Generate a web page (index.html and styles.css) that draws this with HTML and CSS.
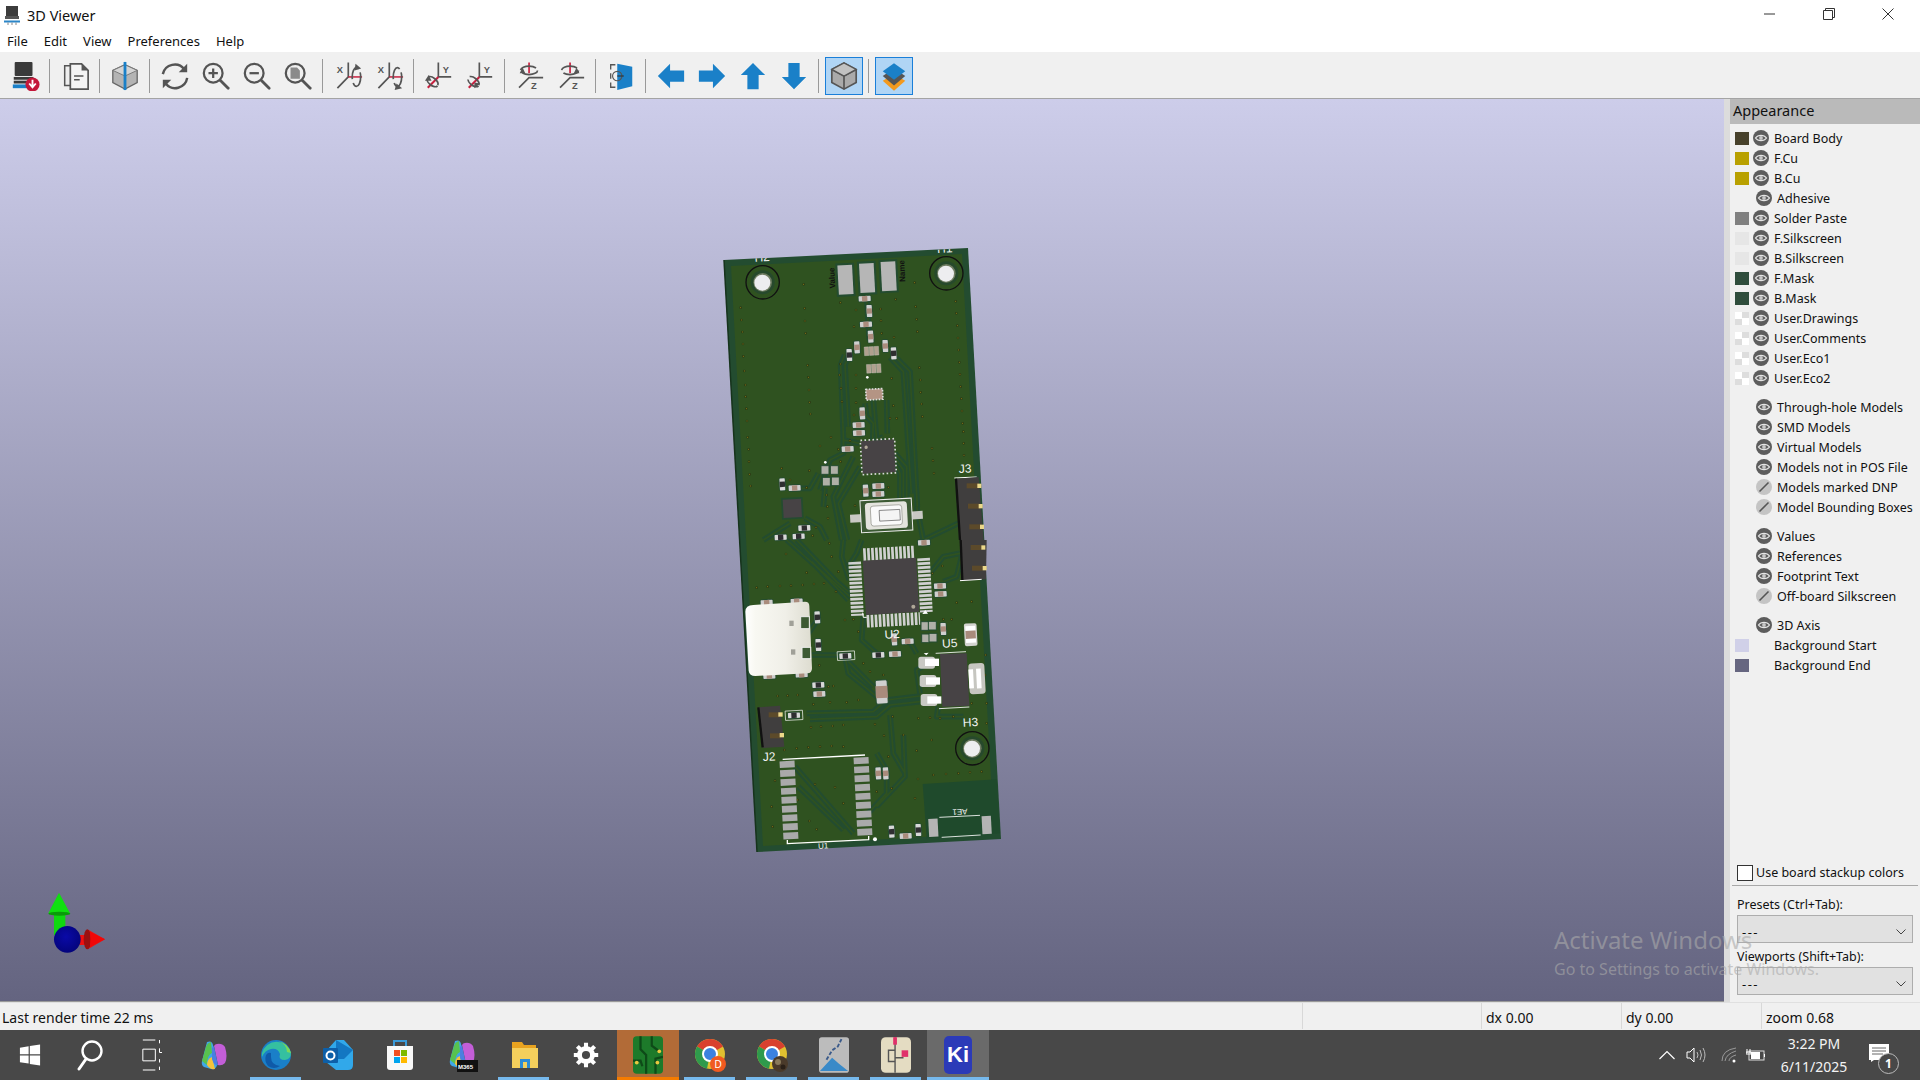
FILE: index.html
```html
<!DOCTYPE html>
<html lang="en">
<head>
  <meta charset="UTF-8">
  <title>3D Viewer</title>
  <link rel="stylesheet" href="styles.css">
</head>
<body>

<!-- shared icons -->
<svg class="defs" width="0" height="0">
  <defs>
    <symbol id="eye" viewBox="0 0 16 16">
      <circle cx="8" cy="8" r="8" fill="#5c5c5c"/>
      <path d="M2.5 8C5 4.4 11 4.4 13.5 8C11 11.6 5 11.6 2.5 8Z" fill="none" stroke="#e4e4e4" stroke-width="1.3"/>
      <circle cx="8" cy="8" r="1.9" fill="#c8c8c8"/>
    </symbol>
    <symbol id="eye-off" viewBox="0 0 16 16">
      <circle cx="8" cy="8" r="8" fill="#c4c4c4"/>
      <path d="M3.5 12.5L12.5 3.5" stroke="#555" stroke-width="1.6"/>
    </symbol>
    <symbol id="mag" viewBox="0 0 32 32">
      <circle cx="13" cy="13" r="10" fill="none" stroke="#545454" stroke-width="2.4"/>
      <path d="M20.5 20.5L29 29" stroke="#545454" stroke-width="3" stroke-linecap="round"/>
    </symbol>
    <symbol id="rot-x" viewBox="0 0 32 32">
      <text x="4" y="13" class="ax">X</text>
      <path d="M16.3 1.7V17L4.7 29" fill="none" stroke="#555" stroke-width="1.8"/>
      <path d="M16.3 17H31" stroke="#c8203f" stroke-width="1.6"/>
      <ellipse cx="25" cy="17" rx="4.5" ry="10" fill="none" stroke="#555" stroke-width="1.8" stroke-dasharray="17 4"/>
    </symbol>
    <symbol id="rot-y" viewBox="0 0 32 32">
      <text x="20" y="13" class="ax">Y</text>
      <path d="M15.3 1.7V17H29" fill="none" stroke="#555" stroke-width="1.8"/>
      <path d="M15.3 17L4 28.5" stroke="#c8203f" stroke-width="2.2"/>
      <ellipse cx="9" cy="22" rx="7" ry="4" transform="rotate(40 9 22)" fill="none" stroke="#555" stroke-width="1.8" stroke-dasharray="15 4"/>
    </symbol>
    <symbol id="rot-z" viewBox="0 0 32 32">
      <text x="17" y="30" class="ax">Z</text>
      <path d="M15 1.7V13" stroke="#c8203f" stroke-width="1.8"/>
      <path d="M30 17.7H15L4.3 28.3" fill="none" stroke="#555" stroke-width="1.8"/>
      <ellipse cx="15" cy="10" rx="9" ry="4.5" fill="none" stroke="#555" stroke-width="1.8" stroke-dasharray="18 4"/>
    </symbol>
    <symbol id="arrow" viewBox="0 0 32 32">
      <path d="M2 16L15 3V10H30V22H15V29Z" fill="#1a80c8"/>
    </symbol>
    <symbol id="chrome" viewBox="0 0 32 32">
      <circle cx="16" cy="16" r="15" fill="#e0c030"/>
      <path d="M16 16L3 8.5A15 15 0 0 1 29 8.5Z" fill="#d9402f"/>
      <path d="M16 16L3 8.5A15 15 0 0 0 13 30.7Z" fill="#2f9a4c"/>
      <circle cx="16" cy="16" r="7" fill="#3b82e0" stroke="#fff" stroke-width="2"/>
    </symbol>
    <symbol id="copilot" viewBox="0 0 32 32">
      <path d="M9 3Q14 1 15 6L19 26Q18 31 13 30L6 28Q3 26 4 22Z" fill="#3fa7e8"/>
      <path d="M4 22L8 8Q9 4 13 3L14 14Q9 16 9 26Z" fill="#58c24f"/>
      <path d="M9 26Q9 20 14 18L17 30Q12 31 9 26Z" fill="#f3c33a"/>
      <path d="M19 5Q24 4 27 8Q30 18 27 24Q24 27 20 26L16 7Q17 5 19 5Z" fill="#c35ed8"/>
      <path d="M16 7L20 26Q16 27 14 20L14 9Z" fill="#4a7fe0"/>
    </symbol>

    <!-- board parts, units are 1/3 px -->
    <g id="r" transform="rotate(-3)">
      <rect x="-21" y="-11" width="42" height="22" rx="8" fill="#244c30"/>
      <rect x="-18" y="-8" width="36" height="16" rx="2" fill="#cfcfcf"/>
      <rect x="-8" y="-8" width="16" height="16" fill="#a98b7c"/>
    </g>
    <g id="rv" transform="rotate(87)">
      <rect x="-21" y="-11" width="42" height="22" rx="8" fill="#244c30"/>
      <rect x="-18" y="-8" width="36" height="16" rx="2" fill="#cfcfcf"/>
      <rect x="-8" y="-8" width="16" height="16" fill="#a98b7c"/>
    </g>
    <g id="c" transform="rotate(-3)">
      <rect x="-21" y="-11" width="42" height="22" rx="8" fill="#244c30"/>
      <rect x="-18" y="-8" width="36" height="16" rx="2" fill="#d8d8d8"/>
      <rect x="-8" y="-8" width="16" height="16" fill="#2e2e30"/>
    </g>
    <g id="cv" transform="rotate(87)">
      <rect x="-21" y="-11" width="42" height="22" rx="8" fill="#244c30"/>
      <rect x="-18" y="-8" width="36" height="16" rx="2" fill="#d8d8d8"/>
      <rect x="-8" y="-8" width="16" height="16" fill="#2e2e30"/>
    </g>
    <g id="hole">
      <circle r="50" fill="none" stroke="#111" stroke-width="4"/>
      <circle r="36" fill="#27492c"/>
      <circle r="28" fill="#6f7c62"/>
      <circle cx="-1" cy="1" r="24" fill="#ededf0"/>
    </g>
    <g id="sq"><rect x="-12" y="-13" width="24" height="26" fill="#b0b0a8" stroke="#244c30" stroke-width="3"/></g>

    <clipPath id="top-edge"><polygon points="43,60 775,25 900,25 900,900 43,900"/></clipPath>

    <path id="via8" d="M92 203h0M94 240h0M97 276h0M99 312h0M100 349h0M103 393h0M106 435h0M107 470h0M109 506h0M111 543h0M113 592h0M116 628h0M117 665h0M119 703h0M122 738h0M281 133h0M284 205h0M285 243h0M287 280h0M293 376h0M295 412h0M297 450h0M299 487h0M301 522h0M614 128h0M617 200h0M620 238h0M622 275h0M628 383h0M631 420h0M632 457h0M635 492h0M637 530h0M737 184h0M739 220h0M742 257h0M744 294h0M746 330h0M748 367h0M750 403h0M752 440h0M754 476h0M756 513h0M758 550h0M760 575h0M761 610h0M762 646h0M666 625h0M669 662h0M672 700h0M391 188h0M438 210h0M432 260h0M512 207h0M513 242h0M515 280h0M557 178h0M552 292h0M391 372h0M389 405h0M438 405h0M393 445h0M438 445h0M396 485h0M438 488h0M432 525h0M545 415h0M550 497h0M540 535h0M560 535h0M363 592h0M385 628h0M330 618h0M298 692h0M290 743h0M350 765h0M352 800h0M354 835h0M240 720h0M215 685h0M318 862h0M308 887h0M420 602h0M392 665h0M535 742h0M435 797h0"/>
    <path id="via9" d="M80 143h0M113 140h0M150 138h0M183 137h0M218 135h0M252 132h0M282 130h0M143 468h0M173 467h0M203 465h0M243 562h0M273 560h0M308 558h0M340 555h0M163 630h0M200 625h0M235 622h0M270 620h0M305 618h0M340 620h0M168 42h0M230 98h0M298 10h0M305 50h0M325 95h0M318 155h0M345 240h0M370 238h0M385 275h0M268 376h0M295 440h0M310 438h0M300 487h0M250 493h0M350 487h0M385 480h0M400 370h0M420 395h0M460 405h0M488 530h0M520 585h0M475 650h0M485 745h0M440 755h0M555 775h0M564 717h0M610 705h0M648 702h0M685 700h0M720 697h0M755 695h0M565 535h0M600 533h0M670 530h0M770 550h0M630 535h0M435 553h0M462 587h0M560 632h0M605 600h0M125 800h0M128 860h0M135 722h0M165 750h0M203 780h0M238 843h0M260 868h0M340 790h0M315 742h0M255 733h0M607 100h0M637 78h0M680 188h0M640 238h0M665 238h0M725 185h0M695 490h0M765 405h0M767 345h0M725 490h0M770 490h0"/>
    <path id="tr8" d="M418 345L405 375L415 560M404 345L392 375L402 640M560 355L600 395L622 800M540 352L580 395L604 760M448 610L400 600V640L360 660L330 750M490 480L500 600L520 590M530 480L532 580M465 490L470 530L490 550L488 600M555 640L590 680V780M555 655L580 690V780M555 670L570 700V780M430 650L370 770L395 900M450 680L385 790L412 900M250 745L300 745L325 700M240 850L160 900M285 835L330 860L350 900M640 900L745 850M470 170L478 300M620 800L640 900M345 745L340 800"/>
    <path id="tr9" d="M360 170L170 0M355 180L245 65M355 155L320 125L200 0M245 345H330M355 365L430 440M400 230L395 300L440 340M230 520L430 515L470 480L570 468M240 538L440 530L480 495L570 485M480 525L490 640L525 700M520 585L525 710L440 800M195 680L370 880M205 740L340 870M440 640L470 690L470 760L405 830M540 305L560 340M235 280L262 240M345 350L355 400L440 470M595 370L560 390L570 460M700 30L680 110L640 125M395 0L380 40L355 80M340 0L335 50L358 120M600 100L640 50L690 40M625 500L620 530L700 530"/>
  </defs>
</svg>

<div class="title-bar">
  <svg class="app-icon" viewBox="0 0 16 20" width="16" height="20">
    <rect x="2" y="1" width="12" height="10" fill="#3c3c3c"/>
    <rect x="1" y="11" width="14" height="3" fill="#555"/>
    <rect x="0" y="15.5" width="16" height="2" fill="#2b86c8"/>
    <path d="M4 17.5v2.5M8 17.5v2.5M12 17.5v2.5" stroke="#888"/>
  </svg>
  <span class="title-text">3D Viewer</span>
  <div class="win-buttons">
    <svg viewBox="0 0 12 12" width="12" height="12"><path d="M0 6H11" stroke="#333"/></svg>
    <svg viewBox="0 0 12 12" width="12" height="12"><path d="M.5 2.5H9.5V11.5H.5ZM2.5 2.5V.5H11.5V9.5H9.5" fill="none" stroke="#333"/></svg>
    <svg viewBox="0 0 12 12" width="12" height="12"><path d="M.5 .5L11.5 11.5M11.5 .5L.5 11.5" stroke="#333"/></svg>
  </div>
</div>

<div class="menu-bar">
  <span>File</span><span>Edit</span><span>View</span><span>Preferences</span><span>Help</span>
</div>

<div class="toolbar">
  <button class="tool"><svg viewBox="0 0 32 32">
    <rect x="5" y="1" width="19" height="15" rx="1" fill="#3a3a3a"/>
    <rect x="4" y="17" width="21" height="3" fill="#3a3a3a"/>
    <rect x="4" y="21" width="21" height="3" fill="#3a3a3a"/>
    <rect x="3" y="25" width="20" height="4" fill="#1a80c8"/>
    <circle cx="24" cy="25" r="7.5" fill="#c4173a"/>
    <path d="M24 20v7M20.500 24l3.500 4 3.500-4" fill="none" stroke="#fff" stroke-width="2"/>
  </svg></button>
  <i class="sep"></i>
  <button class="tool"><svg viewBox="0 0 32 32">
    <path d="M11 5H5V26H11" fill="#eee" stroke="#555" stroke-width="1.6"/>
    <path d="M11 3H23L30 10V30H11Z" fill="#f4f4f4" stroke="#555" stroke-width="1.8"/>
    <path d="M23 3V10H30Z" fill="#555"/>
    <path d="M15 16H25M15 20H21" stroke="#555" stroke-width="1.6"/>
  </svg></button>
  <i class="sep"></i>
  <button class="tool"><svg viewBox="0 0 32 32">
    <path d="M16 4L29 10V23L16 30L3 23V10Z" fill="#b4b4b4" stroke="#666" stroke-width="1.4"/>
    <path d="M3 10L16 16L29 10L16 4Z" fill="#d4d4d4" stroke="#777"/>
    <path d="M16 1V31" stroke="#1a80c8" stroke-width="3"/>
  </svg></button>
  <i class="sep"></i>
  <button class="tool"><svg viewBox="0 0 32 32">
    <path d="M3 14A13 13 0 0 1 26 9" fill="none" stroke="#545454" stroke-width="2.6"/>
    <path d="M29 18A13 13 0 0 1 6 24" fill="none" stroke="#545454" stroke-width="2.6"/>
    <path d="M29 3V12H20Z M3 29V20H12Z" fill="#545454"/>
  </svg></button>
  <button class="tool"><svg viewBox="0 0 32 32"><use href="#mag"/><path d="M8 13H18M13 8V18" stroke="#545454" stroke-width="2.4"/></svg></button>
  <button class="tool"><svg viewBox="0 0 32 32"><use href="#mag"/><path d="M8 13H18" stroke="#545454" stroke-width="2.4"/></svg></button>
  <button class="tool"><svg viewBox="0 0 32 32"><use href="#mag"/><path d="M8 7H15L18 10V19H8Z" fill="#8a8a8a"/></svg></button>
  <i class="sep"></i>
  <button class="tool"><svg viewBox="0 0 32 32"><use href="#rot-x"/><path d="M24 3L30 8L23 10Z" fill="#555"/></svg></button>
  <button class="tool"><svg viewBox="0 0 32 32"><use href="#rot-x"/><path d="M30 29L24 24L22 31Z" fill="#555"/></svg></button>
  <i class="sep"></i>
  <button class="tool"><svg viewBox="0 0 32 32"><use href="#rot-y"/><path d="M1 21L5 15L8 21Z" fill="#555"/></svg></button>
  <button class="tool"><svg viewBox="0 0 32 32"><use href="#rot-y"/><path d="M16 24L10 29L10 23Z" fill="#555"/></svg></button>
  <i class="sep"></i>
  <button class="tool"><svg viewBox="0 0 32 32"><use href="#rot-z"/><path d="M5 13L8 7L11 13Z" fill="#555"/></svg></button>
  <button class="tool"><svg viewBox="0 0 32 32"><use href="#rot-z"/><path d="M25 13L22 7L19 13Z" fill="#555"/></svg></button>
  <i class="sep"></i>
  <button class="tool"><svg viewBox="0 0 32 32">
    <path d="M10 4H5V9M5 13V19M5 23V28H10" fill="none" stroke="#555" stroke-width="1.4"/>
    <path d="M12 3L28 6V27L12 31Z" fill="#1a80c8"/>
    <circle cx="12" cy="16" r="5" fill="none" stroke="#555" stroke-width="1.2"/>
    <path d="M12 16H19" stroke="#333" stroke-width="1.2"/>
  </svg></button>
  <i class="sep"></i>
  <button class="tool"><svg viewBox="0 0 32 32"><use href="#arrow"/></svg></button>
  <button class="tool"><svg viewBox="0 0 32 32"><use href="#arrow" transform="rotate(180 16 16)"/></svg></button>
  <button class="tool"><svg viewBox="0 0 32 32"><use href="#arrow" transform="rotate(90 16 16)"/></svg></button>
  <button class="tool"><svg viewBox="0 0 32 32"><use href="#arrow" transform="rotate(-90 16 16)"/></svg></button>
  <i class="sep"></i>
  <button class="tool on"><svg viewBox="0 0 32 32">
    <path d="M16 2L29 9V23L16 30L3 23V9Z" fill="#aaa" stroke="#555" stroke-width="1.8"/>
    <path d="M3 9L16 16L29 9M16 16V30" fill="none" stroke="#555" stroke-width="1.8"/>
    <path d="M3 9L16 2L29 9L16 16Z" fill="#c2c2c2" stroke="#555" stroke-width="1.4"/>
  </svg></button>
  <i class="sep"></i>
  <button class="tool on"><svg viewBox="0 0 32 32">
    <path d="M4 21L16 14L28 21L16 31.7Z" fill="#f39a1e"/>
    <path d="M4 16L16 8L28 16L16 26Z" fill="#555"/>
    <path d="M16 2.500L28 11L16 20L4 11Z" fill="#1a80c8"/>
  </svg></button>
</div>

<div class="main">
  <div class="canvas">
    <svg class="scene" viewBox="0 99 1724 902">
      <polygon points="724,260 968,248 1001,839 757,852" fill="#234c30"/>
      <path d="M724 260L757 852" stroke="#16331c" stroke-width="1.500"/>
      <polygon points="731,266 962,254 994,833 763,846" fill="#2f5220"/>

      <!-- top half of the board -->
      <g transform="translate(710 240) scale(.33333)">
        <g fill="none" stroke-linejoin="round">
          <use href="#tr8" stroke="#234c30" stroke-width="17"/>
          <use href="#tr8" stroke="#2f5220" stroke-width="5"/>
        </g>
        <g fill="none" stroke-linecap="round">
          <use href="#via8" stroke="#2b3a16" stroke-width="8"/>
          <use href="#via8" stroke="#a08a18" stroke-width="3"/>
        </g>

        <use href="#hole" x="158" y="127"/>
        <use href="#hole" x="709" y="100"/>
        <g clip-path="url(#top-edge)">
          <text class="silk" x="157" y="64" text-anchor="middle" transform="rotate(-3 157 64)">H2</text>
          <text class="silk" x="705" y="38" text-anchor="middle" transform="rotate(-3 705 38)">H1</text>
        </g>

        <g transform="rotate(-3 470 110)" fill="#b6b6b6" stroke="#244c30" stroke-width="12">
          <rect x="384" y="72" width="44" height="88" paint-order="stroke"/>
          <rect x="449" y="70" width="44" height="88" paint-order="stroke"/>
          <rect x="514" y="68" width="44" height="88" paint-order="stroke"/>
        </g>
        <text class="ref" transform="translate(376 145) rotate(-93)">Value</text>
        <text class="ref" transform="translate(586 125) rotate(-93)">Name</text>

        <use href="#r" x="464" y="176"/><use href="#rv" x="478" y="213"/>
        <use href="#r" x="468" y="253"/><use href="#rv" x="482" y="290"/>
        <use href="#rv" x="441" y="322"/><use href="#rv" x="526" y="318"/>
        <use href="#cv" x="418" y="345"/><use href="#cv" x="551" y="340"/>
        <g transform="rotate(-3 484 332)" fill="#b0a08e" stroke="#cfcfcf" stroke-width="1">
          <rect x="463" y="320" width="13" height="26"/><rect x="478" y="320" width="13" height="26"/><rect x="493" y="320" width="13" height="26"/>
          <rect x="467" y="373" width="13" height="26"/><rect x="482" y="373" width="13" height="26"/><rect x="497" y="373" width="13" height="26"/>
        </g>
        <circle cx="472" cy="412" r="4" fill="#fff"/>
        <rect x="468" y="447" width="50" height="32" fill="#b49484" stroke="#ddd" stroke-width="5" stroke-dasharray="5 4" transform="rotate(-3 492 462)"/>
        <use href="#rv" x="457" y="520"/>
        <use href="#r" x="446" y="555"/><use href="#r" x="447" y="579"/><use href="#r" x="413" y="627"/>

        <g transform="rotate(-3 505 650)">
          <rect x="454" y="599" width="102" height="102" fill="none" stroke="#d8d8d8" stroke-width="6" stroke-dasharray="5 7"/>
          <rect x="456" y="601" width="98" height="98" fill="#474345"/>
          <circle cx="470" cy="620" r="5" fill="#b0a898"/>
        </g>
        <use href="#sq" x="345" y="690"/><use href="#sq" x="373" y="690"/>
        <use href="#sq" x="349" y="725"/><use href="#sq" x="376" y="724"/>
        <circle cx="346" cy="667" r="4" fill="#fff"/>

        <use href="#rv" x="467" y="752"/><use href="#r" x="505" y="738"/><use href="#r" x="505" y="762"/>
        <use href="#cv" x="217" y="733"/><use href="#r" x="254" y="744"/>
        <rect x="217" y="775" width="60" height="60" fill="#474345" stroke="#244c30" stroke-width="5" transform="rotate(-3 247 805)"/>
        <use href="#c" x="283" y="864"/><use href="#c" x="266" y="889"/><use href="#c" x="212" y="892"/>

        <g transform="rotate(-3 535 823)">
          <rect x="420" y="818" width="40" height="24" fill="#c9c9c4"/>
          <rect x="606" y="818" width="32" height="24" fill="#c9c9c4"/>
          <rect x="452" y="778" width="154" height="96" fill="#3c5a34" stroke="#ececec" stroke-width="3"/>
          <rect x="466" y="786" width="126" height="80" rx="10" fill="#e4e4de"/>
          <rect x="482" y="796" width="94" height="60" rx="8" fill="#fafafa" stroke="#8c8c84" stroke-width="2"/>
          <rect x="508" y="810" width="62" height="32" fill="#f4f4f4" stroke="#555" stroke-width="2"/>
        </g>

        <text class="silk" x="766" y="698" text-anchor="middle" transform="rotate(-3 766 698)">J3</text>
        <path d="M733 714L800 711" stroke="#fff" stroke-width="3"/>
        <polygon points="738,716 806,711 821,900 750,900" fill="#403e3e"/>
        <path d="M738 716L750 900" stroke="#111" stroke-width="7"/>
        <g fill="#5c4a2a">
          <rect x="770" y="730" width="36" height="15"/><rect x="774" y="791" width="36" height="15"/><rect x="778" y="853" width="36" height="15"/>
        </g>
        <g fill="#ecd88a">
          <rect x="802" y="731" width="12" height="13"/><rect x="806" y="792" width="12" height="13"/><rect x="810" y="854" width="12" height="13"/>
        </g>
      </g>

      <!-- bottom half of the board -->
      <g transform="translate(730 540) scale(.33333)">
        <polygon points="578,732 800,718 810,880 590,895" fill="#1f4a2c"/>
        <g fill="none" stroke-linejoin="round">
          <use href="#tr9" stroke="#234c30" stroke-width="17"/>
          <use href="#tr9" stroke="#2f5220" stroke-width="5"/>
        </g>
        <g fill="none" stroke-linecap="round">
          <use href="#via9" stroke="#2b3a16" stroke-width="8"/>
          <use href="#via9" stroke="#a08a18" stroke-width="3"/>
        </g>

        <polygon points="690,0 770,0 768,118 695,122" fill="#403e3e"/>
        <path d="M690 122L755 118" stroke="#fff" stroke-width="3"/>
        <path d="M692 0L697 120" stroke="#111" stroke-width="7"/>
        <rect x="722" y="15" width="32" height="15" fill="#5c4a2a"/><rect x="754" y="16" width="12" height="13" fill="#ecd88a"/>
        <rect x="726" y="77" width="32" height="15" fill="#5c4a2a"/><rect x="758" y="78" width="12" height="13" fill="#ecd88a"/>

        <g transform="rotate(-3 480 140)" fill="none" stroke="#d0d0d0" stroke-dasharray="8 4">
          <path d="M405 40H560" stroke-width="38" />
          <path d="M405 240H565" stroke-width="38" />
          <path d="M378 60V222" stroke-width="38" />
          <path d="M585 60V222" stroke-width="38" />
        </g>
        <polygon points="398,62 558,53 568,215 408,225" fill="#474345"/>
        <circle cx="550" cy="200" r="6" fill="#b0a898"/>
        <path d="M398 218L400 232H410" fill="none" stroke="#fff" stroke-width="3"/>
        <path d="M577 222L586 210L594 221Z" fill="#fff"/>
        <use href="#r" x="582" y="8"/><use href="#r" x="630" y="138"/><use href="#r" x="632" y="162"/>

        <!-- usb connector -->
        <use href="#r" x="110" y="188"/><use href="#r" x="200" y="184"/>
        <use href="#r" x="118" y="408"/><use href="#r" x="215" y="404"/>
        <defs>
          <linearGradient id="usb" x1="0" y1="0" x2="1" y2="0">
            <stop offset="0" stop-color="#ffffff"/><stop offset=".15" stop-color="#f8f8f2"/>
            <stop offset=".6" stop-color="#f0efe8"/><stop offset="1" stop-color="#dddcd0"/>
          </linearGradient>
        </defs>
        <path d="M70 195L225 185Q238 185 238 198L246 385Q246 400 232 400L76 408Q58 408 56 392L46 215Q46 196 70 195Z" fill="url(#usb)"/>
        <rect x="178" y="242" width="13" height="16" fill="#a0a098"/>
        <rect x="183" y="328" width="13" height="16" fill="#a0a098"/>
        <rect x="212" y="230" width="26" height="36" fill="#3c5a34" stroke="#eee" stroke-width="3"/>
        <rect x="216" y="322" width="26" height="34" fill="#3c5a34" stroke="#eee" stroke-width="3"/>

        <use href="#cv" x="262" y="232"/><use href="#cv" x="265" y="315"/>
        <use href="#c" x="265" y="435"/><use href="#r" x="268" y="462"/>
        <rect x="322" y="334" width="52" height="26" fill="none" stroke="#fff" stroke-width="2" transform="rotate(-3 348 347)"/>
        <use href="#c" x="346" y="348"/>
        <use href="#c" x="445" y="345"/><use href="#r" x="495" y="342"/>
        <use href="#rv" x="493" y="298"/><use href="#r" x="533" y="304"/>
        <g transform="rotate(-3 455 455)">
          <rect x="437" y="420" width="36" height="72" rx="5" fill="#cfcfcf" stroke="#244c30" stroke-width="3"/>
          <rect x="437" y="438" width="36" height="36" fill="#a98b7c"/>
        </g>
        <g transform="rotate(-3 723 282)">
          <rect x="703" y="250" width="38" height="68" rx="6" fill="#d4d4d0"/>
          <rect x="707" y="258" width="30" height="14" fill="#fff"/>
          <rect x="707" y="272" width="30" height="24" fill="#a98b7c"/>
          <rect x="707" y="296" width="30" height="12" fill="#fff"/>
        </g>
        <use href="#sq" x="585" y="258"/><use href="#sq" x="607" y="257"/>
        <use href="#sq" x="587" y="295"/><use href="#sq" x="609" y="293"/>
        <use href="#rv" x="640" y="267"/>

        <text class="silk" x="487" y="295" text-anchor="middle" transform="rotate(-3 487 295)">U2</text>
        <text class="silk" x="660" y="322" text-anchor="middle" transform="rotate(-3 660 322)">U5</text>
        <text class="silk" x="722" y="559" text-anchor="middle" transform="rotate(-3 722 559)">H3</text>
        <text class="silk" x="118" y="662" text-anchor="middle" transform="rotate(-3 118 662)">J2</text>

        <g fill="#c9c9c4">
          <rect x="565" y="350" width="50" height="36" rx="8"/>
          <rect x="569" y="405" width="50" height="36" rx="8"/>
          <rect x="572" y="462" width="50" height="36" rx="8"/>
        </g>
        <g fill="#fff">
          <rect x="585" y="356" width="42" height="22"/>
          <rect x="588" y="412" width="42" height="22"/>
          <rect x="592" y="469" width="42" height="22"/>
        </g>
        <polygon points="630,342 710,340 718,497 637,500" fill="#474345"/>
        <path d="M617 340L708 335M627 506L718 501" stroke="#fff" stroke-width="2.500"/>
        <path d="M581 340L596 338L589 346Z" fill="#fff"/>
        <rect x="717" y="370" width="48" height="92" rx="10" fill="#c6c6c0" transform="rotate(-3 741 416)"/>
        <path d="M722 388L725 445M745 386L748 445" stroke="#fff" stroke-width="14"/>

        <use href="#hole" x="727" y="625"/>

        <!-- J2 -->
        <polygon points="85,502 150,497 163,620 98,624" fill="#403e3e"/>
        <path d="M85 502L98 622" stroke="#111" stroke-width="7"/>
        <rect x="116" y="517" width="32" height="15" fill="#5c4a2a"/><rect x="145" y="517" width="13" height="13" fill="#ecd88a"/>
        <rect x="120" y="580" width="32" height="15" fill="#5c4a2a"/><rect x="149" y="579" width="13" height="13" fill="#ecd88a"/>
        <rect x="166" y="512" width="52" height="28" fill="none" stroke="#fff" stroke-width="2" transform="rotate(-3 192 526)"/>
        <use href="#c" x="192" y="526"/>

        <!-- module -->
        <path d="M158 658L405 645" stroke="#fff" stroke-width="4"/>
        <path d="M172 900V911L416 899V888" fill="none" stroke="#fff" stroke-width="4"/>
        <g stroke="#aaa" stroke-width="45" stroke-dasharray="20 6.8" fill="none">
          <path d="M171 663L183 900"/>
          <path d="M393 652L405 890"/>
        </g>
        <use href="#rv" x="445" y="700"/><use href="#rv" x="467" y="700"/>
        <use href="#cv" x="485" y="875"/><use href="#r" x="527" y="888"/><use href="#cv" x="565" y="870"/>
        <circle cx="435" cy="898" r="6" fill="#fff"/>
        <text class="silk small" x="280" y="926" text-anchor="middle" transform="rotate(-3 280 926)">U1</text>

        <!-- antenna -->
        <rect x="596" y="836" width="28" height="54" fill="#b4b4b4" transform="rotate(-3 610 862)"/>
        <rect x="756" y="828" width="28" height="54" fill="#b4b4b4" transform="rotate(-3 770 855)"/>
        <path d="M628 832L750 826M635 892L752 885" stroke="#fff" stroke-width="2.500"/>
        <text class="silk small" transform="translate(712 806) rotate(177)">AE1</text>
      </g>

      <!-- axis gizmo -->
      <g transform="translate(30 880) scale(.33333)">
        <defs>
          <radialGradient id="ball" cx=".45" cy=".4" r=".6">
            <stop offset="0" stop-color="#0a0aa8"/><stop offset="1" stop-color="#04047c"/>
          </radialGradient>
        </defs>
        <rect x="72" y="100" width="34" height="65" fill="#10d810"/>
        <path d="M87 38L120 100Q87 112 55 100Z" fill="#10e010"/>
        <ellipse cx="88" cy="101" rx="33" ry="6" fill="#0a9a0a"/>
        <rect x="148" y="165" width="30" height="30" fill="#f01010"/>
        <path d="M225 178L176 150Q160 178 176 206Z" fill="#f01010"/>
        <ellipse cx="172" cy="178" rx="11" ry="30" fill="#9a1010"/>
        <path d="M225 178L180 156Q182 178 180 200Z" fill="#f00808"/>
        <circle cx="112" cy="178" r="40" fill="url(#ball)"/>
      </g>
    </svg>
  </div>
  <div class="splitter"></div>

  <div class="panel">
    <div class="panel-head">Appearance</div>
    <div class="layers">
      <div class="row"><span class="swatch sw-body"></span><svg class="eye"><use href="#eye"/></svg><span>Board Body</span></div>
      <div class="row"><span class="swatch sw-cu"></span><svg class="eye"><use href="#eye"/></svg><span>F.Cu</span></div>
      <div class="row"><span class="swatch sw-cu"></span><svg class="eye"><use href="#eye"/></svg><span>B.Cu</span></div>
      <div class="row indent"><svg class="eye"><use href="#eye"/></svg><span>Adhesive</span></div>
      <div class="row"><span class="swatch sw-paste"></span><svg class="eye"><use href="#eye"/></svg><span>Solder Paste</span></div>
      <div class="row"><span class="swatch sw-silk"></span><svg class="eye"><use href="#eye"/></svg><span>F.Silkscreen</span></div>
      <div class="row"><span class="swatch sw-silk"></span><svg class="eye"><use href="#eye"/></svg><span>B.Silkscreen</span></div>
      <div class="row"><span class="swatch sw-mask"></span><svg class="eye"><use href="#eye"/></svg><span>F.Mask</span></div>
      <div class="row"><span class="swatch sw-mask"></span><svg class="eye"><use href="#eye"/></svg><span>B.Mask</span></div>
      <div class="row"><span class="swatch sw-user"></span><svg class="eye"><use href="#eye"/></svg><span>User.Drawings</span></div>
      <div class="row"><span class="swatch sw-user"></span><svg class="eye"><use href="#eye"/></svg><span>User.Comments</span></div>
      <div class="row"><span class="swatch sw-user"></span><svg class="eye"><use href="#eye"/></svg><span>User.Eco1</span></div>
      <div class="row"><span class="swatch sw-user"></span><svg class="eye"><use href="#eye"/></svg><span>User.Eco2</span></div>

      <div class="row indent group"><svg class="eye"><use href="#eye"/></svg><span>Through-hole Models</span></div>
      <div class="row indent"><svg class="eye"><use href="#eye"/></svg><span>SMD Models</span></div>
      <div class="row indent"><svg class="eye"><use href="#eye"/></svg><span>Virtual Models</span></div>
      <div class="row indent"><svg class="eye"><use href="#eye"/></svg><span>Models not in POS File</span></div>
      <div class="row indent"><svg class="eye"><use href="#eye-off"/></svg><span>Models marked DNP</span></div>
      <div class="row indent"><svg class="eye"><use href="#eye-off"/></svg><span>Model Bounding Boxes</span></div>

      <div class="row indent group"><svg class="eye"><use href="#eye"/></svg><span>Values</span></div>
      <div class="row indent"><svg class="eye"><use href="#eye"/></svg><span>References</span></div>
      <div class="row indent"><svg class="eye"><use href="#eye"/></svg><span>Footprint Text</span></div>
      <div class="row indent"><svg class="eye"><use href="#eye-off"/></svg><span>Off-board Silkscreen</span></div>

      <div class="row indent group"><svg class="eye"><use href="#eye"/></svg><span>3D Axis</span></div>
      <div class="row"><span class="swatch sw-start"></span><span class="no-eye">Background Start</span></div>
      <div class="row"><span class="swatch sw-end"></span><span class="no-eye">Background End</span></div>
    </div>

    <div class="panel-foot">
      <label class="stackup"><span class="check"></span>Use board stackup colors</label>
      <div class="combo-label">Presets (Ctrl+Tab):</div>
      <div class="combo">---<svg viewBox="0 0 10 6" width="10" height="6"><path d="M.5 .5L5 5L9.500 .5" fill="none" stroke="#444"/></svg></div>
      <div class="combo-label second">Viewports (Shift+Tab):</div>
      <div class="combo">---<svg viewBox="0 0 10 6" width="10" height="6"><path d="M.5 .5L5 5L9.500 .5" fill="none" stroke="#444"/></svg></div>
    </div>
  </div>

  <div class="activate">
    <div class="activate-big">Activate Windows</div>
    <div class="activate-small">Go to Settings to activate Windows.</div>
  </div>
</div>

<div class="status-bar">
  <div class="cell first">Last render time 22 ms</div>
  <div class="cell blank"></div>
  <div class="cell">dx 0.00</div>
  <div class="cell">dy 0.00</div>
  <div class="cell last">zoom 0.68</div>
</div>

<div class="taskbar">
  <div class="task narrow"><svg viewBox="0 0 24 24" width="22" height="22"><path d="M1 4L10.500 2.500V11.200H1ZM11.800 2.300L23 .5V11.200H11.800ZM1 12.500H10.500V21.300L1 20ZM11.800 12.500H23V23.500L11.800 21.700Z" fill="#fff"/></svg></div>
  <div class="task narrow"><svg viewBox="0 0 32 32" width="32" height="32"><circle cx="18" cy="12" r="9.500" fill="none" stroke="#fff" stroke-width="2.400"/><path d="M12 20L5 30" stroke="#fff" stroke-width="3" stroke-linecap="round"/></svg></div>
  <div class="task wide"><svg viewBox="0 0 24 38" width="20" height="36"><path d="M1 1H16M1 12H16V26H1ZM1 37H16M21 1V5M21 11V16H24M21 24V28M21 33V37" fill="none" stroke="#fff" stroke-width="1.200"/></svg></div>
  <div class="task"><svg viewBox="0 0 32 32" width="32" height="32"><use href="#copilot"/></svg></div>
  <div class="task run"><svg viewBox="0 0 32 32" width="32" height="32">
    <circle cx="16" cy="16" r="15" fill="#1a7fc8"/>
    <path d="M2 14A15 15 0 0 1 31 14Q31 20 25 21Q18 21 20 15Q18 9 11 10Q5 11 2 18Z" fill="#35c0a0"/>
    <path d="M31 14Q28 4 18 2Q27 5 27 13Z" fill="#7ed957"/>
    <path d="M11 18Q11 26 20 27Q14 31 8 27Q4 22 6 16Q8 13 11 14Z" fill="#0f5aa8"/>
  </svg></div>
  <div class="task"><svg viewBox="0 0 32 32" width="32" height="32">
    <path d="M14 1H22L31 11V26Q31 31 26 31H14L4 23V12Z" fill="#31a8ea"/>
    <path d="M14 1L31 11L22 20H14Z" fill="#1377c2"/>
    <rect x="1" y="9" width="15" height="15" rx="1" fill="#0d5fa8"/>
    <circle cx="8.500" cy="16.500" r="4" fill="none" stroke="#fff" stroke-width="2"/>
  </svg></div>
  <div class="task"><svg viewBox="0 0 32 32" width="32" height="34">
    <path d="M10 7V2H22V7" fill="none" stroke="#3a9ad9" stroke-width="2"/>
    <path d="M3 7H29V28Q29 31 26 31H6Q3 31 3 28Z" fill="#f8f8f8"/>
    <rect x="10" y="11" width="6" height="6" fill="#f25022"/><rect x="17" y="11" width="6" height="6" fill="#7fba00"/>
    <rect x="10" y="18" width="6" height="6" fill="#00a4ef"/><rect x="17" y="18" width="6" height="6" fill="#ffb900"/>
  </svg></div>
  <div class="task"><svg viewBox="0 0 32 34" width="32" height="34"><use href="#copilot" width="32" height="32"/><rect x="11" y="22" width="21" height="12" fill="#111"/><text class="m365" x="12" y="31">M365</text></svg></div>
  <div class="task run"><svg viewBox="0 0 32 32" width="32" height="32">
    <path d="M4 3H14L16 6H28V28H4Z" fill="#e8a320"/>
    <rect x="4" y="9" width="26" height="20" fill="#f4cf5c"/>
    <path d="M12 29V20H22V29H19V23H15V29Z" fill="#2d8bd6"/>
  </svg></div>
  <div class="task"><svg viewBox="0 0 32 32" width="26" height="26">
    <circle cx="16" cy="16" r="8" fill="none" stroke="#fff" stroke-width="6"/>
    <path d="M16 1V7M16 25V31M1 16H7M25 16H31M5.400 5.400L9.600 9.600M22.400 22.400L26.600 26.600M5.400 26.600L9.600 22.400M22.400 9.600L26.600 5.400" stroke="#fff" stroke-width="5"/>
  </svg></div>
  <div class="task active-pcb"><svg viewBox="0 0 32 40" width="30" height="38">
    <rect width="32" height="40" rx="4" fill="#1d7a2a"/>
    <path d="M8 0V14L14 20V40M20 0V10L28 16M32 22L24 24V40M0 26H8L10 32" fill="none" stroke="#0e4a18" stroke-width="2.400"/>
    <circle cx="4" cy="28" r="2" fill="#e8c840"/><circle cx="28" cy="16" r="2" fill="#e8c840"/><circle cx="26" cy="28" r="2" fill="#e8c840"/>
  </svg></div>
  <div class="task run"><svg viewBox="0 0 32 38" width="32" height="38"><use href="#chrome" width="32" height="32" y="2"/><circle cx="24" cy="28" r="8" fill="#f05a20"/><text class="badge-d" x="24" y="32" text-anchor="middle">D</text></svg></div>
  <div class="task run"><svg viewBox="0 0 32 38" width="32" height="38"><use href="#chrome" width="32" height="32" y="2"/><circle cx="24" cy="28" r="8" fill="#4a3a2a"/><circle cx="22" cy="26" r="3" fill="#8a7a5a"/><circle cx="27" cy="31" r="2.500" fill="#2a2018"/></svg></div>
  <div class="task run"><svg viewBox="0 0 32 38" width="30" height="38">
    <rect width="32" height="38" rx="3" fill="#bcbcbc"/>
    <path d="M1 36L14 22L21 28L31 36Z" fill="#3a8ac8"/>
    <path d="M8 24L14 14L20 10L24 2" fill="none" stroke="#3a5a8a" stroke-width="2" stroke-dasharray="4 2"/>
  </svg></div>
  <div class="task run"><svg viewBox="0 0 32 38" width="30" height="38">
    <rect width="32" height="38" rx="5" fill="#e4dcc2"/>
    <path d="M15 0V38M15 14H8V26H15M15 22H24" fill="none" stroke="#555" stroke-width="1.500"/>
    <path d="M15 0V8" stroke="#e0306a" stroke-width="4"/>
    <rect x="22" y="14" width="7" height="7" fill="#e0306a"/>
  </svg></div>
  <div class="task active-ki"><div class="ki-logo">Ki</div></div>

  <div class="tray">
    <svg viewBox="0 0 16 10" width="16" height="10"><path d="M.5 9L8 1.500L15.500 9" fill="none" stroke="#fff" stroke-width="1.200"/></svg>
    <svg class="tray-sound" viewBox="0 0 20 16" width="20" height="16"><path d="M1 5H4L8 1V15L4 11H1Z" fill="none" stroke="#fff"/><path d="M11 5Q13 8 11 11M14 3Q17 8 14 13M17 1Q21 8 17 15" fill="none" stroke="#bbb"/></svg>
    <svg class="tray-wifi" viewBox="0 0 16 16" width="16" height="16"><path d="M1 14Q1 3 15 1M4 14Q5 7 15 4M8 14Q8 10 15 8" fill="none" stroke="#999"/><circle cx="13" cy="14" r="1.500" fill="#fff"/></svg>
    <svg class="tray-batt" viewBox="0 0 20 14" width="20" height="14"><rect x="3" y="3" width="15" height="9" fill="none" stroke="#ddd"/><rect x="5" y="4" width="9" height="7" fill="#fff"/><path d="M18.500 6V9M1 1V5M4 1V5M0 4H5V6H0Z" stroke="#fff" fill="none"/></svg>
    <div class="clock"><div>3:22 PM</div><div>6/11/2025</div></div>
    <div class="notify">
      <svg viewBox="0 0 20 18" width="20" height="18"><path d="M0 0H20V16H5L2 18V16H0Z" fill="#fff"/><path d="M3 4H17M3 7H17M3 10H14" stroke="#666"/></svg>
      <span class="notify-badge">1</span>
    </div>
  </div>
</div>

</body>
</html>
```

FILE: styles.css
```css
* {
  box-sizing: border-box;
}

html, body {
  margin: 0;
  padding: 0;
}

body {
  width: 1920px;
  height: 1080px;
  overflow: hidden;
  display: flex;
  flex-direction: column;
  background: #f0f0f0;
  color: #111;
  font-family: "Noto Sans", "Liberation Sans", sans-serif;
  font-size: 12.5px;
}

.defs {
  position: absolute;
}

.title-bar {
  height: 30px;
  background: #fff;
  display: flex;
  align-items: center;
  padding-left: 4px;
  font-size: 14.5px;
}

.app-icon {
  margin-right: 7px;
}

.win-buttons {
  margin-left: auto;
  display: flex;
  gap: 47px;
  padding-right: 26px;
  margin-top: -2px;
}

.menu-bar {
  height: 22px;
  background: #fff;
  display: flex;
  align-items: center;
  gap: 16px;
  padding-left: 7px;
  font-size: 13px;
}

.toolbar {
  height: 47px;
  display: flex;
  align-items: center;
  padding: 1px 0 0 4px;
  background: #f0f0f0;
  border-bottom: 1px solid #a4a4a4;
}

.tool {
  width: 41px;
  height: 38px;
  padding: 0;
  border: 0;
  background: none;
  display: flex;
  align-items: center;
  justify-content: center;
}

.tool svg {
  width: 30px;
  height: 30px;
}

.tool.on {
  width: 38px;
  background: #b0d5f5;
  border: 1.5px solid #1a7fd9;
  margin: 0 1.5px;
}

.sep {
  width: 1px;
  height: 34px;
  margin: 0 4px;
  background: #999;
}

.ax {
  font: bold 10px "Liberation Sans", sans-serif;
  fill: #555;
}

.main {
  height: 903px;
  display: flex;
  position: relative;
}

.canvas {
  width: 1724px;
  height: 100%;
  background: linear-gradient(to bottom, #cdcdea, #646480);
  border-bottom: 1px solid #999;
}

.scene {
  display: block;
  width: 1724px;
  height: 902px;
}

.silk {
  font: 36px "Liberation Sans", sans-serif;
  fill: #f4f4f4;
}

.silk.small {
  font-size: 24px;
}

.ref {
  font: bold 24px "Liberation Sans", sans-serif;
  fill: #111;
}

.splitter {
  width: 6px;
  background: #dcdcdc;
}

.panel {
  width: 190px;
  display: flex;
  flex-direction: column;
}

.panel-head {
  height: 25px;
  background: #bababa;
  font-size: 14.5px;
  line-height: 23px;
  padding-left: 3px;
}

.layers {
  padding-top: 4px;
}

.row {
  height: 20px;
  display: flex;
  align-items: center;
  padding-left: 5px;
  white-space: nowrap;
}

.row.indent {
  padding-left: 26px;
}

.row.group {
  margin-top: 9px;
}

.swatch {
  width: 14px;
  height: 13px;
  margin-right: 4px;
}

.sw-body { background: #47412b; }
.sw-cu { background: #b8a000; }
.sw-paste { background: #808080; }
.sw-silk { background: #e6e6e6; }
.sw-mask { background: #2f4d3c; }
.sw-start { background: #d0d0e8; }
.sw-end { background: #666680; }
.sw-user { background: repeating-conic-gradient(#ddd 0 25%, #fff 0 50%) 0 0 / 14px 13px; }

.eye {
  width: 16px;
  height: 16px;
  margin-right: 5px;
  flex: none;
}

.no-eye {
  margin-left: 21px;
}

.panel-foot {
  margin-top: auto;
  padding: 0 7px 7px;
}

.stackup {
  display: flex;
  align-items: center;
  height: 24px;
  margin: 0 -5px;
  padding: 0 5px 2px 5px;
  border-bottom: 1px solid #a8a8a8;
  white-space: nowrap;
}

.check {
  width: 16px;
  height: 16px;
  margin-right: 3px;
  background: #fff;
  border: 1px solid #333;
}

.combo-label {
  margin-top: 11px;
  height: 18px;
  line-height: 15px;
}

.combo-label.second {
  margin-top: 6px;
}

.combo {
  width: 176px;
  height: 28px;
  background: #e1e1e1;
  border: 1px solid #adadad;
  display: flex;
  align-items: center;
  justify-content: space-between;
  padding: 5px 6px 0 4px;
  letter-spacing: 1.5px;
  font-size: 13px;
}

.activate {
  position: absolute;
  left: 1554px;
  top: 825px;
  color: rgba(170, 170, 170, 0.6);
  white-space: nowrap;
  pointer-events: none;
}

.activate-big {
  font-size: 24px;
  line-height: 32px;
}

.activate-small {
  font-size: 16px;
  line-height: 26px;
}

.status-bar {
  height: 28px;
  display: flex;
  font-size: 14px;
  border-top: 1px solid #e0e0e0;
}

.cell {
  width: 140px;
  padding-left: 4px;
  line-height: 30px;
  border-left: 1px solid #d8d8d8;
  margin-bottom: 1px;
}

.cell.first {
  width: 1302px;
  padding-left: 2px;
  border-left: 0;
}

.cell.blank {
  width: 179px;
}

.cell.last {
  width: 159px;
}

.taskbar {
  height: 50px;
  background: #484848;
  display: flex;
}

.task {
  width: 62px;
  height: 50px;
  display: flex;
  align-items: center;
  justify-content: center;
  position: relative;
}

.task.narrow {
  width: 60px;
}

.task.wide {
  width: 63px;
}

.task.run::after,
.active-pcb::after,
.active-ki::after {
  content: "";
  position: absolute;
  left: 5px;
  right: 6px;
  bottom: 0;
  height: 3px;
  background: #76b9ed;
}

.active-pcb {
  background: #b26b37;
}

.active-pcb::after {
  left: 0;
  right: 0;
  background: #f57c00;
}

.active-ki {
  background: #6a6a6a;
}

.active-ki::after {
  left: 0;
  right: 0;
}

.ki-logo {
  width: 28px;
  height: 38px;
  border-radius: 5px;
  background: #2b3ab8;
  color: #fff;
  font: bold 22px/38px "Liberation Sans", sans-serif;
  text-align: center;
}

.m365 {
  font: bold 6px "Liberation Sans", sans-serif;
  fill: #fff;
}

.badge-d {
  font: 10px "Liberation Sans", sans-serif;
  fill: #fff;
}

.tray {
  margin-left: auto;
  display: flex;
  align-items: center;
  color: #fff;
  padding-right: 31px;
}

.tray-sound {
  margin-left: 11px;
}

.tray-wifi {
  margin-left: 15px;
}

.tray-batt {
  margin-left: 9px;
}

.clock {
  width: 90px;
  margin-left: 3px;
  margin-right: 10px;
  text-align: center;
  font-size: 14px;
  line-height: 23px;
  color: #f4f4f4;
}

.notify {
  position: relative;
  width: 20px;
  height: 18px;
  margin-top: -4px;
}

.notify-badge {
  position: absolute;
  left: 9px;
  top: 9px;
  width: 21px;
  height: 21px;
  border-radius: 50%;
  background: #484848;
  border: 1px solid #bbb;
  color: #fff;
  font-size: 12px;
  font-weight: bold;
  line-height: 19px;
  text-align: center;
}
```
